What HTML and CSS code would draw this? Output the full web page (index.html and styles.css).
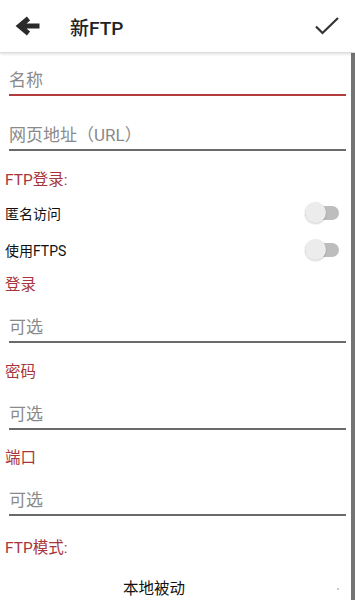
FILE: index.html
```html
<!DOCTYPE html>
<html lang="zh">
<head>
<meta charset="utf-8">
<link rel="stylesheet" href="styles.css">
</head>
<body>
<div class="app">
  <header class="bar">
    <svg class="back" width="26" height="20" viewBox="0 0 26 20"><path d="M24.5 10H7M13.5 2.5L4.5 10l9 7.5" fill="none" stroke="#2a2a2a" stroke-width="5" stroke-linejoin="miter"/></svg>
    <div class="title">新FTP</div>
    <svg class="ok" width="26" height="20" viewBox="0 0 26 20"><path d="M2 10.5l6.5 6.5L24 2" fill="none" stroke="#333" stroke-width="2.2"/></svg>
  </header>
  <main class="content">
    <div class="field active f1">名称</div>
    <div class="field f2">网页地址（URL）</div>
    <div class="label l1">FTP登录:</div>
    <div class="row"><span>匿名访问</span><span class="switch"><span class="knob"></span></span></div>
    <div class="row"><span>使用FTPS</span><span class="switch"><span class="knob"></span></span></div>
    <div class="label l2">登录</div>
    <div class="field f3">可选</div>
    <div class="label l3">密码</div>
    <div class="field f3">可选</div>
    <div class="label l4">端口</div>
    <div class="field f3">可选</div>
    <div class="label l5">FTP模式:</div>
    <div class="spinner"><span>本地被动</span><span class="dot"></span></div>
  </main>
</div>
</body>
</html>
```
FILE: styles.css
```css
html, body { margin: 0; padding: 0; background: #fff; }
body { font-family: Roboto, "Noto Sans CJK SC", sans-serif; color: #1e1e1e; overflow: hidden; }
.app { width: 355px; height: 600px; display: flex; flex-direction: column; overflow: hidden; }
.bar { height: 52px; flex: none; display: flex; align-items: center; border-bottom: 1px solid #dcdcdc; box-shadow: 0 1px 3px rgba(0,0,0,0.14); position: relative; z-index: 1; }
.back { margin-left: 15px; }
.title { margin-left: 29px; font-size: 19px; font-weight: 500; color: #222; flex: 1; }
.ok { margin-right: 15px; }
.content { flex: 1; border-right: 4px solid #747474; padding: 0 5px 0 5px; display: flex; flex-direction: column; }
.field { margin-left: 4px; line-height: 24px; font-size: 17px; color: #8a8a8a; padding-bottom: 2px; border-bottom: 2px solid #6a6a6a; }
.field.active { border-bottom-color: #b03c3c; }
.f1 { margin-top: 15px; }
.f2 { margin-top: 27px; }
.f3 { margin-top: 20px; }
.label { color: #a8353a; font-size: 15.5px; line-height: 20px; }
.l1 { margin-top: 19px; margin-bottom: 4px; }
.l2 { margin-top: 7px; }
.l3 { margin-top: 19px; }
.l4 { margin-top: 18px; }
.l5 { margin-top: 22px; }
.row { height: 37px; display: flex; align-items: center; justify-content: space-between; font-size: 14px; color: #111; }
.switch { position: relative; width: 34px; height: 14px; border-radius: 7px; background: #bdbdbd; margin-right: 7px; }
.knob { position: absolute; left: 0; top: -4px; width: 21px; height: 21px; border-radius: 50%; background: #ececec; box-shadow: 0 1px 2px rgba(0,0,0,0.2); }
.spinner { margin-top: 19px; height: 24px; line-height: 24px; font-size: 15.5px; color: #111; display: flex; align-items: center; padding-left: 118px; }
.spinner span:first-child { flex: 1; }
.dot { width: 2px; height: 2px; background: #c8c8c8; margin-right: 7px; }
```
